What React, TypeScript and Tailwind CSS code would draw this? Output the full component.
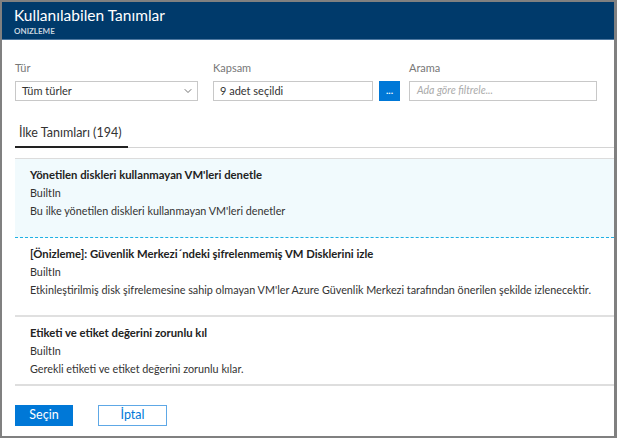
import { ChevronDown } from "lucide-react";

const items = [
  {
    title: "Yönetilen diskleri kullanmayan VM'leri denetle",
    kind: "BuiltIn",
    desc: "Bu ilke yönetilen diskleri kullanmayan VM'leri denetler",
    active: true,
  },
  {
    title: "[Önizleme]: Güvenlik Merkezi´ndeki şifrelenmemiş VM Disklerini izle",
    kind: "BuiltIn",
    desc: "Etkinleştirilmiş disk şifrelemesine sahip olmayan VM'ler Azure Güvenlik Merkezi tarafından önerilen şekilde izlenecektir.",
    active: false,
  },
  {
    title: "Etiketi ve etiket değerini zorunlu kıl",
    kind: "BuiltIn",
    desc: "Gerekli etiketi ve etiket değerini zorunlu kılar.",
    active: false,
  },
];

export default function App() {
  return (
    <div
      className="w-[617px] h-[438px] border-2 border-r-[3px] border-[#808080] bg-white flex flex-col overflow-hidden"
      style={{ fontFamily: "Lato, 'Liberation Sans', sans-serif" }}
    >
      {/* header */}
      <div className="h-[38px] bg-[#003a6b] border-b border-[#4f78a0] pl-3 pt-[4px]">
        <h1 className="text-white text-[15.5px] leading-[19px]">Kullanılabilen Tanımlar</h1>
        <p className="text-[#c7d3df] text-[8px] leading-[12px] font-bold">ONIZLEME</p>
      </div>

      <div className="flex-1 flex flex-col pl-[13px]">
        {/* filters */}
        <div className="flex items-end mt-[20px] text-[11px]">
          <div className="w-[183px] mr-[15px]">
            <div className="text-[#777] leading-[16px] mb-[5px]">Tür</div>
            <div className="h-[20px] border border-[#c8c8c8] flex items-center justify-between pl-[6px] pr-[3px] text-[#333]">
              <span>Tüm türler</span>
              <ChevronDown className="w-[12px] h-[12px] text-[#444]" strokeWidth={1.5} />
            </div>
          </div>
          <div className="w-[160px] mr-[6px]">
            <div className="text-[#777] leading-[16px] mb-[5px]">Kapsam</div>
            <div className="h-[20px] border border-[#c8c8c8] flex items-center pl-[6px] text-[#333]">9 adet seçildi</div>
          </div>
          <div className="w-[21px] h-[20px] bg-[#0078d7] mr-[9px] flex items-center justify-center text-white text-[10px] font-bold leading-none pb-[2px]">
            ...
          </div>
          <div className="w-[188px]">
            <div className="text-[#777] leading-[16px] mb-[5px]">Arama</div>
            <div className="h-[20px] border border-[#c8c8c8] flex items-center pl-[7px] text-[#aaa] italic text-[10.5px]">
              Ada göre filtrele...
            </div>
          </div>
        </div>

        {/* tab */}
        <div className="mt-[24px] flex items-end border-b border-[#d4d4d4]">
          <div className="w-[113px] border-b-2 border-[#222] -mb-px pl-[4px] pb-[5px] text-[12.5px] text-[#333] leading-[16px]">
            İlke Tanımları (194)
          </div>
        </div>

        {/* list (scroll area) */}
        <div className="mt-[10px] h-[228px] overflow-hidden border-t border-b-2 border-t-[#dcdcdc] border-b-[#dedede] text-[10.8px] text-[#333]">
          {items.map((it, i) => (
            <div
              key={it.title}
              className={
                it.active
                  ? "h-[79px] bg-[#f1fafd] border-b border-dashed border-[#1fb0e4] pl-[15px] pt-[7px]"
                  : i === items.length - 1
                  ? "h-[79px] pl-[15px] pt-[7px]"
                  : "h-[79px] border-b-2 border-[#e0e0e0] pl-[15px] pt-[7px]"
              }
            >
              <div className="font-bold text-[11.3px] text-[#222] leading-[18px] whitespace-nowrap">{it.title}</div>
              <div className="leading-[18px]">{it.kind}</div>
              <div className="leading-[18px] whitespace-nowrap">{it.desc}</div>
            </div>
          ))}
        </div>

        {/* footer */}
        <div className="mt-auto mb-[10px] flex gap-[25px] text-[12.5px]">
          <button className="w-[58px] h-[21px] bg-[#0078d7] text-white">Seçin</button>
          <button className="w-[69px] h-[21px] border border-[#5ea8e6] text-[#0078d7] bg-white">İptal</button>
        </div>
      </div>
    </div>
  );
}
